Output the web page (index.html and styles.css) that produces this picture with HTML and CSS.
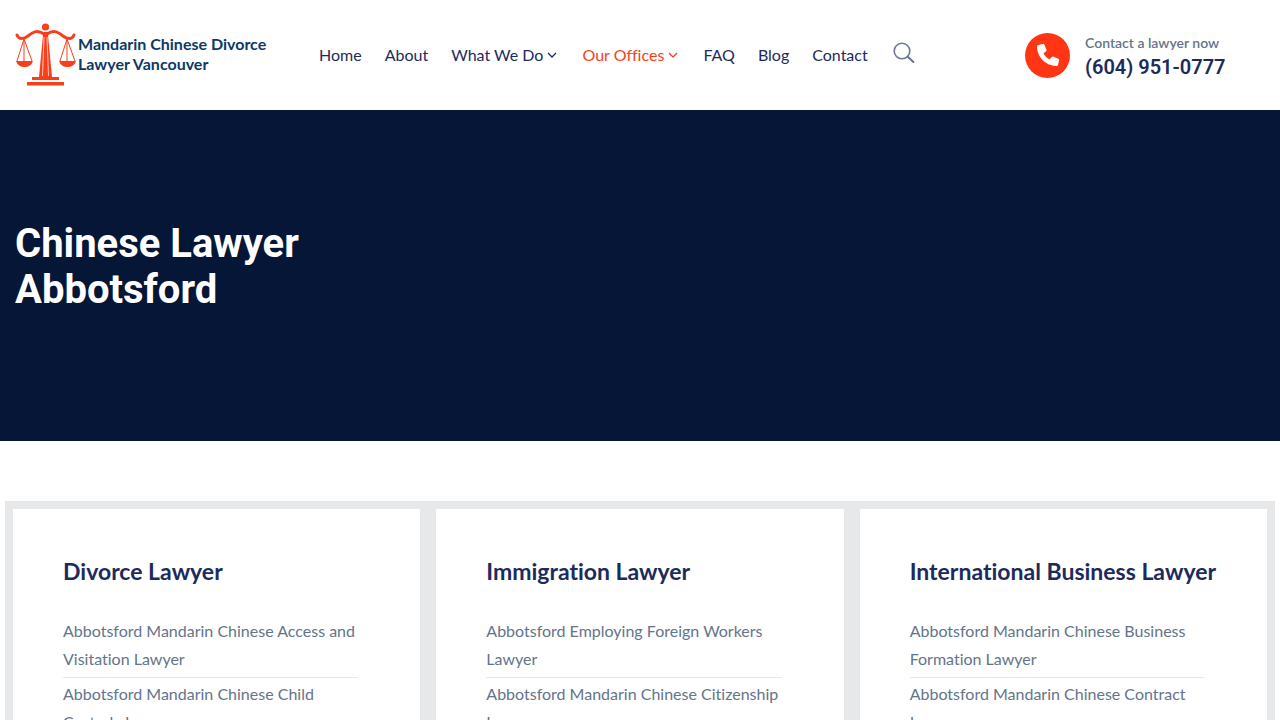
FILE: index.html
```
<!DOCTYPE html>
<html lang="en">
<head>
  <meta charset="UTF-8" />
  <meta name="viewport" content="width=device-width, initial-scale=1.0"/>
  <title>Chinese Lawyer Abbotsford</title>
  <link rel="stylesheet" href="styles.css">
</head>
<body>

  <header class="header">
    <a class="logo" href="#">
      <svg class="logo-icon" viewBox="0 0 62 64" width="62" height="64" aria-hidden="true">
        <g fill="#f93e1c">
          <circle cx="30.500" cy="4" r="3.600"/>
          <path d="M28 9h5v3l4 42H24l4-42z"/>
          <path d="M17 54h27v3H17zM12 59h37v3.500H12z"/>
          <path d="M1 38h17q-2 6-8.500 6T1 38zM44 38h17q-2 6-8.500 6T44 38z"/>
        </g>
        <path d="M29 14l-1.500 39M32 14l1.500 39" stroke="#fff" stroke-width=".7"/>
        <path d="M2 12c2 5 7 4 11 1 6-5 10-6 16-2M59 12c-2 5-7 4-11 1-6-5-10-6-16-2" fill="none" stroke="#f93e1c" stroke-width="3" stroke-linecap="round"/>
        <path d="M9 16 2 38M9 16v22M9 16l8 22M52 16l-7 22M52 16v22M52 16l8 22" fill="none" stroke="#f93e1c" stroke-width="1"/>
      </svg>
      <span class="logo-text">Mandarin Chinese Divorce<br>Lawyer Vancouver</span>
    </a>

    <nav class="nav">
      <a href="#">Home</a>
      <a href="#">About</a>
      <a href="#" class="dropdown">What We Do
        <svg class="chevron" viewBox="0 0 10 6" width="10" height="6" aria-hidden="true"><path d="M1 1l4 4 4-4"/></svg>
      </a>
      <a href="#" class="dropdown active">Our Offices
        <svg class="chevron" viewBox="0 0 10 6" width="10" height="6" aria-hidden="true"><path d="M1 1l4 4 4-4"/></svg>
      </a>
      <a href="#">FAQ</a>
      <a href="#">Blog</a>
      <a href="#">Contact</a>
      <button class="search" type="button" aria-label="Search">
        <svg viewBox="0 0 22 22" width="22" height="22" fill="none" stroke="#6b7690">
          <circle cx="9" cy="9" r="7.800" stroke-width="1.600"/>
          <path d="M14.600 14.600l5.800 5.400" stroke-width="2" stroke-linecap="round"/>
        </svg>
      </button>
    </nav>

    <div class="contact">
      <span class="contact-icon">
        <svg viewBox="0 0 24 24" width="24" height="24" aria-hidden="true">
          <path fill="#fff" d="M6.800.9 2 2Q1 2.300 1 3.300C1 14.300 9.800 23 20.700 23q1 0 1.300-1l1.100-4.800q.2-1-.7-1.500l-5.200-2.200q-.9-.3-1.500.4l-2.200 2.700A17 17 0 0 1 7.400 10.500l2.700-2.200q.7-.6.4-1.500L8.300 1.600Q7.800.7 6.800.9z"/>
        </svg>
      </span>
      <div>
        <div class="contact-label">Contact a lawyer now</div>
        <a class="contact-number" href="tel:6049510777">(604) 951-0777</a>
      </div>
    </div>
  </header>

  <section class="hero">
    <h1>Chinese Lawyer<br>Abbotsford</h1>
  </section>

  <main class="services">
    <section class="card">
      <h2>Divorce Lawyer</h2>
      <ul>
        <li><a href="#">Abbotsford Mandarin Chinese Access and Visitation Lawyer</a></li>
        <li><a href="#">Abbotsford Mandarin Chinese Child Custody Lawyer</a></li>
      </ul>
    </section>
    <section class="card">
      <h2>Immigration Lawyer</h2>
      <ul>
        <li><a href="#">Abbotsford Employing Foreign Workers Lawyer</a></li>
        <li><a href="#">Abbotsford Mandarin Chinese Citizenship Lawyer</a></li>
      </ul>
    </section>
    <section class="card">
      <h2>International Business Lawyer</h2>
      <ul>
        <li><a href="#">Abbotsford Mandarin Chinese Business Formation Lawyer</a></li>
        <li><a href="#">Abbotsford Mandarin Chinese Contract Lawyer</a></li>
      </ul>
    </section>
  </main>

</body>
</html>
```
FILE: styles.css
```
* {
  box-sizing: border-box;
}
body {
  margin: 0;
  font-family: Lato, sans-serif;
  font-size: 16px;
  font-variant-ligatures: none;
  line-height: 28px;
  color: #64748b;
  background: #fff;
}
a {
  color: inherit;
  text-decoration: none;
}
.header {
  display: grid;
  grid-template-columns: 304px 1fr 240px;
  align-items: center;
  min-height: 110px;
  padding: 0 15px;
}
.logo {
  display: flex;
  align-items: center;
  gap: 1px;
  color: #0b3a66;
}
.logo-text {
  padding-bottom: 2px;
  font-size: 16px;
  font-weight: 700;
  line-height: 20px;
  white-space: nowrap;
}
.nav {
  display: flex;
  align-items: center;
  gap: 23px;
  color: #1d2b5c;
  font-size: 16px;
  white-space: nowrap;
}
.nav .dropdown {
  padding-right: 2px;
}
.nav .active {
  color: #f93e1c;
}
.chevron {
  margin-bottom: 3px;
  fill: none;
  stroke: currentColor;
  stroke-width: 1.3;
}
.search {
  display: flex;
  padding: 0 2px 4px;
  border: none;
  background: none;
  cursor: pointer;
}
.contact {
  display: flex;
  align-items: center;
  gap: 15px;
}
.contact-icon {
  display: flex;
  align-items: center;
  justify-content: center;
  width: 45px;
  height: 45px;
  border-radius: 50%;
  background: #ff3514;
}
.contact-label {
  font-size: 14px;
  font-weight: 600;
  line-height: 24px;
}
.contact-number {
  display: block;
  font-family: Roboto, sans-serif;
  font-size: 20px;
  font-weight: 600;
  line-height: 24px;
  color: #1d2b5c;
}
.hero {
  padding: 111px 15px 128px;
  background: #051636;
}
.hero h1 {
  margin: 0;
  font-family: Roboto, sans-serif;
  font-size: 40px;
  font-weight: 700;
  line-height: 46px;
  color: #fff;
}
.services {
  display: grid;
  grid-template-columns: repeat(3, minmax(0, 1fr));
  margin: 60px 5px;
  border: solid #e6e8ea;
  border-width: 8px 0;
}
.card {
  padding: 44px 50px 50px;
  border: solid #e6e8ea;
  border-width: 0 8px;
}
.card h2 {
  margin: 0 0 26px;
  font-size: 23px;
  font-weight: 700;
  line-height: 36px;
  color: #1d2b5c;
  white-space: nowrap;
}
.card ul {
  margin: 0;
  padding: 0 12px 0 0;
  list-style: none;
}
.card li {
  padding: 2px 0 4px;
  border-bottom: 1px solid #e6e8ea;
}
```
